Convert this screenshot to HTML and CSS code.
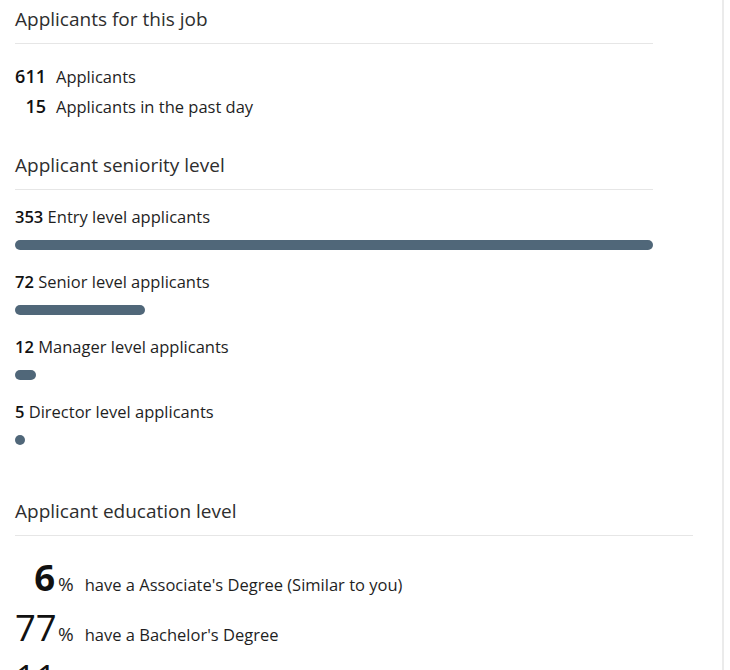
FILE: index.html
```html
<!DOCTYPE html>
<html lang="en">
<head>
<meta charset="utf-8">
<title>Applicant insights</title>
<link rel="stylesheet" href="styles.css">
</head>
<body>
<div class="page">
  <section class="sec">
    <h2 class="sec-title">Applicants for this job</h2>
    <div class="counts">
      <div class="count-row"><span class="count-num">611</span><span class="count-label">Applicants</span></div>
      <div class="count-row"><span class="count-num">15</span><span class="count-label">Applicants in the past day</span></div>
    </div>
  </section>

  <section class="sec sec-seniority">
    <h2 class="sec-title">Applicant seniority level</h2>
    <ul class="levels">
      <li class="level"><p class="level-text"><b>353</b> Entry level applicants</p><div class="bar" style="width:638px"></div></li>
      <li class="level"><p class="level-text"><b>72</b> Senior level applicants</p><div class="bar" style="width:130px"></div></li>
      <li class="level"><p class="level-text"><b>12</b> Manager level applicants</p><div class="bar" style="width:21px"></div></li>
      <li class="level"><p class="level-text"><b>5</b> Director level applicants</p><div class="bar" style="width:10px"></div></li>
    </ul>
  </section>

  <section class="sec sec-edu">
    <h2 class="sec-title">Applicant education level</h2>
    <ul class="edu">
      <li class="edu-row edu-row-you"><span class="edu-num">6</span><span class="edu-pct">%</span><span class="edu-label">have a Associate's Degree (Similar to you)</span></li>
      <li class="edu-row"><span class="edu-num">77</span><span class="edu-pct">%</span><span class="edu-label">have a Bachelor's Degree</span></li>
      <li class="edu-row"><span class="edu-num">11</span><span class="edu-pct">%</span><span class="edu-label">have a Master's Degree</span></li>
    </ul>
  </section>
</div>
</body>
</html>
```

FILE: styles.css
```css
* { box-sizing: border-box; }
html, body { margin: 0; padding: 0; background: #fff; }
body {
  font-family: "Open Sans", "Noto Sans", sans-serif;
  color: #1f1f1f;
  overflow: hidden;
  height: 670px;
}
.page {
  width: 724px;
  height: 670px;
  overflow: hidden;
  border-right: 2px solid #ebebeb;
  padding: 6px 0 0 15px;
}
.sec { width: 638px; }
.sec-title {
  margin: 0;
  font-size: 19px;
  font-weight: 400;
  line-height: 26px;
  color: #2e2e2e;
  padding-bottom: 11px;
  border-bottom: 1px solid #e6e6e6;
}
.counts { margin-top: 17px; }
.count-row { display: flex; align-items: baseline; height: 30px; line-height: 30px; }
.count-num {
  width: 31px;
  text-align: right;
  font-size: 18px;
  font-weight: 600;
  color: #111;
  margin-right: 10px;
}
.count-label { font-size: 16.5px; }

.sec-seniority { margin-top: 31px; }
.levels { list-style: none; margin: 15px 0 0; padding: 0; }
.level { margin-bottom: 20px; }
.level-text { margin: 0; font-size: 16.5px; line-height: 24px; }
.level-text b { font-weight: 600; color: #111; }
.bar {
  margin-top: 11px;
  height: 10px;
  border-radius: 5px;
  background: #506779;
}

.sec-edu { margin-top: 53px; width: 678px; }
.edu { list-style: none; margin: 16px 0 0; padding: 0; }
.edu-row { display: flex; align-items: baseline; height: 50px; line-height: 50px; }
.edu-num {
  width: 40px;
  text-align: right;
  font-size: 36.5px;
  color: #111;
}
.edu-row-you .edu-num { font-weight: 700; }
.edu-pct { font-size: 19px; margin-left: 3px; margin-right: 11px; }
.edu-label { font-size: 16.5px; }
```
